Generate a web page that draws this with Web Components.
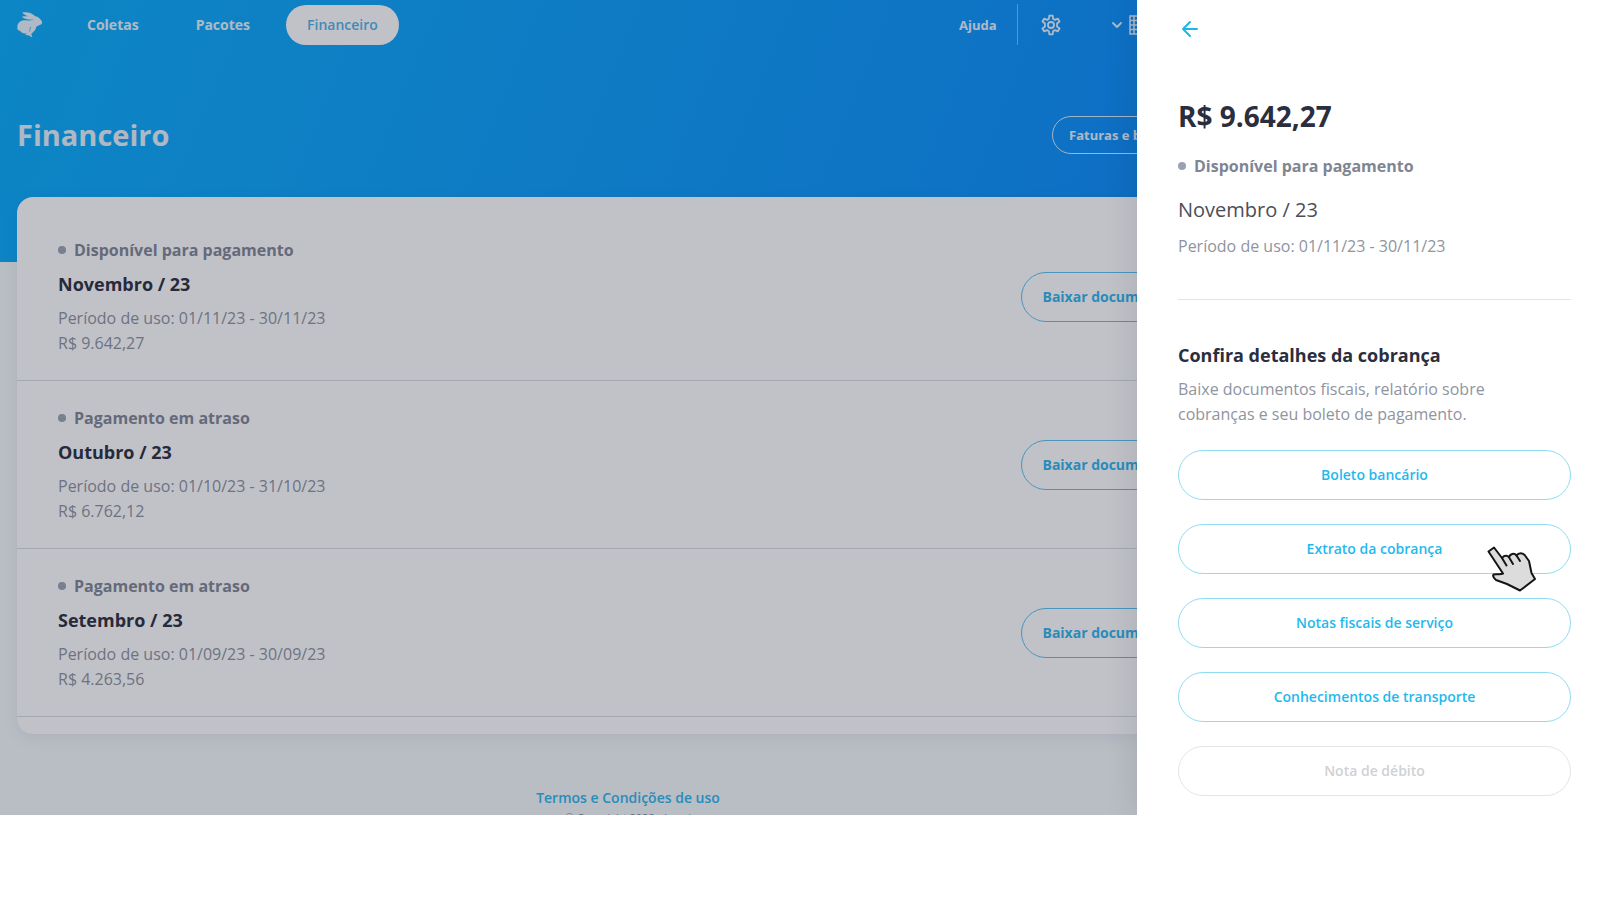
<!DOCTYPE html>
<html lang="pt-BR">
<head>
<meta charset="utf-8">
<meta name="viewport" content="width=device-width, initial-scale=1">
<title>Financeiro</title>
<style>
body { margin: 0; background: #fff; font-family: "Open Sans", "Noto Sans", sans-serif; }
</style>
</head>
<body>
<finance-app></finance-app>
<script>
const define = (name, html) => {
  const template = document.createElement('template');
  template.innerHTML = '<style>*{box-sizing:border-box}h1,h2,h3,p{margin:0}</style>' + html;
  customElements.define(name, class extends HTMLElement {
    constructor() {
      super();
      this.attachShadow({ mode: 'open' }).append(template.content.cloneNode(true));
    }
  });
};

define('pill-button', `
<style>
:host { display: block; }
button { display: block; width: 100%; height: 50px; padding: 0 20px; border: 1px solid #8fdcf5; border-radius: 25px; background: none; color: #1fb9ee; font: 600 14px/20px "Open Sans", sans-serif; white-space: nowrap; cursor: pointer; }
:host([tone="strong"]) button { border-color: #56c2ee; color: #2bb5ee; font-weight: 700; }
:host([tone="light"]) button { height: 38px; padding: 0 16px; border-color: #d5edfb; color: #e4f3fc; font-size: 13px; font-weight: 700; text-align: left; }
:host([tone="off"]) button { border-color: #e4e5e8; color: #cfd1d5; cursor: default; }
</style>
<button type="button"><slot></slot></button>`);

define('status-line', `
<style>
:host { display: flex; align-items: center; gap: 8px; font-size: 16px; line-height: 24px; font-weight: 700; color: #7f8592; }
i { width: 8px; height: 8px; border-radius: 50%; background: #9aa2b1; }
</style>
<i></i><span><slot></slot></span>`);

define('invoice-row', `
<style>
:host { display: flex; align-items: center; justify-content: space-between; height: 168px; padding: 0 40px 0 41px; border-bottom: 1px solid #d9dbe0; }
h2 { margin: 8px 0; font-size: 18px; line-height: 28px; color: #292d3b; }
p { font-size: 16px; line-height: 25px; color: #8c919c; }
</style>
<div>
  <status-line><slot name="status"></slot></status-line>
  <h2><slot name="month"></slot></h2>
  <p><slot name="period"></slot></p>
  <p><slot name="amount"></slot></p>
</div>
<pill-button tone="strong">Baixar documentos</pill-button>`);

define('top-nav', `
<style>
:host { display: flex; align-items: center; justify-content: space-between; height: 49px; color: #e6f4fc; }
nav, .tools { display: flex; align-items: center; }
nav { gap: 15px; }
a { color: inherit; text-decoration: none; font-size: 14px; line-height: 20px; font-weight: 700; }
nav a { padding: 10px 21px; border-radius: 20px; }
nav a[aria-current] { background: #fff; color: #4fb2e8; font-weight: 600; }
nav .logo { display: flex; padding: 0; margin-right: 8px; }
.tools { width: 280px; }
.tools a { width: 58px; font-size: 13px; }
.tools hr { width: 1px; height: 41px; margin: 0; border: 0; background: #7dbdf2; }
button { display: flex; align-items: center; gap: 6px; padding: 0; border: 0; background: none; color: inherit; }
.gear { margin: 0 49px 0 22px; }
</style>
<nav>
  <a class="logo" href="#" aria-label="Início"><svg width="26" height="26" viewBox="0 0 26 26" fill="currentColor"><path d="M5.200.7C9.500-.6 15.500 1.200 18.300 4.300c3 .4 5 2.500 6.400 4.800.9 1.600.2 3-1.500 3.700-1.400.7-2.600 1.200-3.800 1.700-.3 2.200-1.600 4.300-3.400 5.700l-1.700 1.700c-.3.900.8 1.500.9 2.800-.6.900-1.900-.3-2.900-1.200l-3.500-.6c-.6-.4-.2-1 .9-1.100l1.500-.6C9.500 21.700 6.900 22 4.400 20.200l-1.500-1.400C1 18.700-.2 17 .4 15.600 0 11.500 3 8.400 7.300 8.300l5.700.2c1.500 0 2.800-.2 3.100-.9C12.200 8 8 7.400 4.700 4.700c.9-.7 3.300-.7 6.100-.1C8.300 2.900 6.500 2.100 5.200.7z"/><path d="M13.600 14.800c-.4 2-1.200 3.200-.7 4.700" fill="none" stroke="#078ddd" stroke-width=".6"/></svg></a>
  <a href="#coletas">Coletas</a>
  <a href="#pacotes">Pacotes</a>
  <a href="#financeiro" aria-current="page">Financeiro</a>
</nav>
<div class="tools">
  <a href="#ajuda">Ajuda</a>
  <hr>
  <button class="gear" type="button" aria-label="Configurações"><svg width="22" height="22" viewBox="0 0 24 24" fill="none" stroke="currentColor" stroke-width="2" stroke-linejoin="round"><path d="M9.700 5.200 10.200 1.800h3.600l.5 3.400 2 1.200 3.200-1.300 1.800 3.100-2.700 2.100v3.400l2.700 2.100-1.800 3.100-3.200-1.300-2 1.200-.5 3.400h-3.600l-.5-3.400-2-1.200-3.200 1.300-1.800-3.100 2.700-2.100v-3.400L2.700 8.200l1.800-3.100 3.200 1.300z"/><circle cx="12" cy="12" r="3.300"/></svg></button>
  <button type="button" aria-label="Empresa"><svg width="12" height="8" viewBox="0 0 12 8" fill="none" stroke="currentColor" stroke-width="1.800" stroke-linecap="round" stroke-linejoin="round"><path d="m2 2 4 4 4-4"/></svg><svg width="18" height="20" viewBox="0 0 18 20" fill="none" stroke="currentColor" stroke-width="1.500"><path d="M1 1h16v18H1zM1 5.500h16M1 10h16M1 14.500h16M5 1v18M9 1v14M13 1v18"/></svg></button>
</div>`);

define('charge-drawer', `
<style>
:host { display: block; padding: 16px 29px 0 41px; background: #fff; box-shadow: 0 0 32px rgba(20,24,50,.12); }
.back { display: flex; padding: 0; border: 0; background: none; color: #1cb7ea; }
h2 { margin-top: 54px; font-size: 28px; line-height: 40px; color: #2a2e3d; }
status-line { margin-top: 18px; }
.month { margin-top: 18px; font-size: 20px; line-height: 28px; color: #4a4e59; }
.note { max-width: 340px; font-size: 16px; line-height: 25px; color: #8f949e; }
.period { margin-top: 10px; }
hr { height: 1px; margin: 40px 0 41px; border: 0; background: #e1e3e7; }
h3 { margin-bottom: 8px; font-size: 18px; line-height: 28px; color: #2a2e3d; }
.actions { display: grid; gap: 24px; margin-top: 23px; }
</style>
<button class="back" type="button" aria-label="Voltar"><svg width="24" height="26" viewBox="0 0 24 26" fill="none" stroke="currentColor" stroke-width="2" stroke-linecap="round" stroke-linejoin="round"><path d="M19 13H5m7-7-7 7 7 7"/></svg></button>
<h2>R$ 9.642,27</h2>
<status-line>Disponível para pagamento</status-line>
<p class="month">Novembro / 23</p>
<p class="note period">Período de uso: 01/11/23 - 30/11/23</p>
<hr>
<h3>Confira detalhes da cobrança</h3>
<p class="note">Baixe documentos fiscais, relatório sobre cobranças e seu boleto de pagamento.</p>
<div class="actions">
  <pill-button>Boleto bancário</pill-button>
  <pill-button>Extrato da cobrança</pill-button>
  <pill-button>Notas fiscais de serviço</pill-button>
  <pill-button>Conhecimentos de transporte</pill-button>
  <pill-button tone="off">Nota de débito</pill-button>
</div>`);

define('hand-pointer', `
<style>
:host { display: block; pointer-events: none; }
svg { display: block; }
</style>
<svg width="52" height="48" viewBox="0 0 52 48" fill="#dcdcdc" stroke="#151515" stroke-width="2" stroke-linejoin="round" stroke-linecap="round"><path d="M1.500 5.500 7 1.500 15 12C17 9.500 20 9 22 11.200 23 8 27 6.500 29.500 9.500 31.500 6.500 36 6.500 38 9.500L42 15 44.500 27 48 33 33 44.500 20 38 9 34C6.500 32 5.500 30 6.500 28.500 9.500 27.500 13 29 16 27.500z"/><path d="m15 12 4.500 7.500M22 11.200l4 6.800M29.500 9.500l3.500 5.500" fill="none"/></svg>`);

define('finance-app', `
<style>
:host { display: block; position: relative; height: calc(100vh - 85px); overflow: hidden; background: linear-gradient(112deg, #05acfa 0%, #08a0fa 30%, #088efa 68%, #0a7cf4 100%) top / 100% 262px no-repeat #f4f9fa; }
.page { width: calc(100% - 344px); padding: 0 17px; }
.title { display: flex; justify-content: space-between; align-items: center; height: 75px; margin: 48px 0 25px; color: #e6f1fa; }
h1 { font-size: 29px; line-height: 40px; }
.title pill-button { width: 187px; }
.card { padding: 16px 0 17px; border-radius: 16px; background: #fff; box-shadow: 0 4px 16px rgba(40,50,90,.08); }
footer { margin-top: 52px; text-align: center; color: #7f8592; }
footer a { display: block; font-size: 14px; line-height: 24px; font-weight: 600; color: #2bb5ee; text-decoration: none; }
footer p { font-size: 11px; line-height: 16px; }
.shade { position: absolute; inset: 0; background: rgba(34,37,57,.28); }
charge-drawer { position: absolute; top: 0; right: 0; bottom: 0; width: 463px; }
hand-pointer { position: absolute; top: 546px; right: 61px; }
</style>
<div class="page">
  <top-nav></top-nav>
  <div class="title"><h1>Financeiro</h1><pill-button tone="light">Faturas e boletos</pill-button></div>
  <main class="card">
    <invoice-row><span slot="status">Disponível para pagamento</span><span slot="month">Novembro / 23</span><span slot="period">Período de uso: 01/11/23 - 30/11/23</span><span slot="amount">R$ 9.642,27</span></invoice-row>
    <invoice-row><span slot="status">Pagamento em atraso</span><span slot="month">Outubro / 23</span><span slot="period">Período de uso: 01/10/23 - 31/10/23</span><span slot="amount">R$ 6.762,12</span></invoice-row>
    <invoice-row><span slot="status">Pagamento em atraso</span><span slot="month">Setembro / 23</span><span slot="period">Período de uso: 01/09/23 - 30/09/23</span><span slot="amount">R$ 4.263,56</span></invoice-row>
  </main>
  <footer><a href="#termos">Termos e Condições de uso</a><p>© Copyright 2022 - Loggi</p></footer>
</div>
<div class="shade"></div>
<charge-drawer></charge-drawer>
<hand-pointer></hand-pointer>`);
</script>
</body>
</html>
